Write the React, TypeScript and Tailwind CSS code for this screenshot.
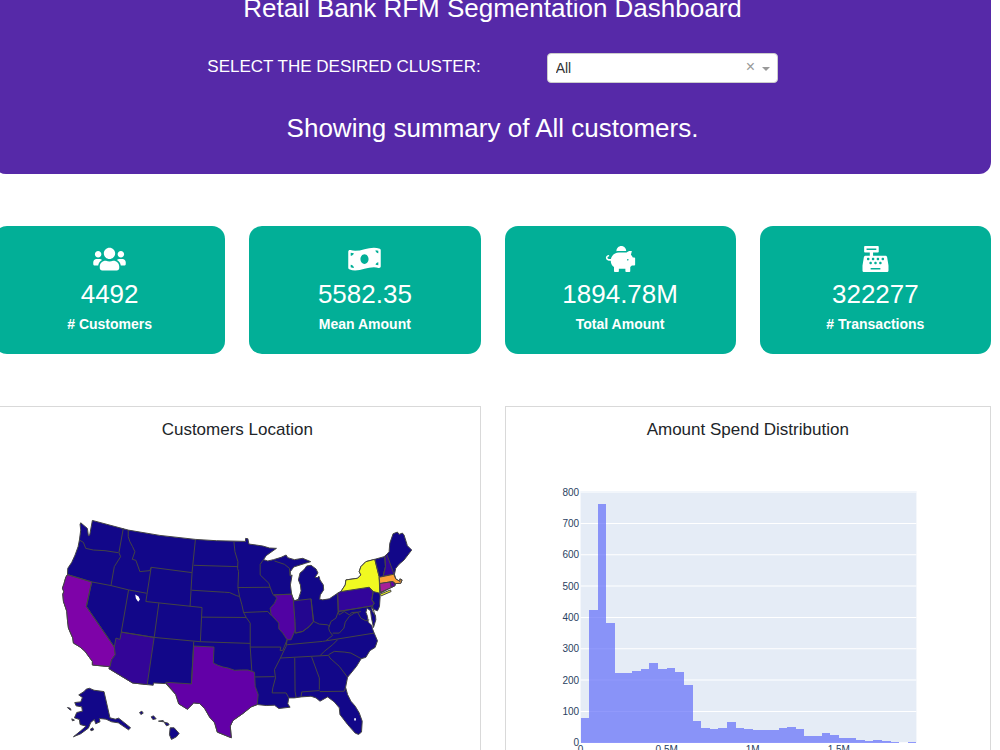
import { FaUsers, FaMoneyBillWave, FaPiggyBank, FaCashRegister } from "react-icons/fa";
import type { IconType } from "react-icons";

type Stat = { icon: IconType; value: string; label: string };

const stats: Stat[] = [
  { icon: FaUsers, value: "4492", label: "# Customers" },
  { icon: FaMoneyBillWave, value: "5582.35", label: "Mean Amount" },
  { icon: FaPiggyBank, value: "1894.78M", label: "Total Amount" },
  { icon: FaCashRegister, value: "322277", label: "# Transactions" },
];

const bins = [
  80, 423, 763, 383, 223, 223, 230, 237, 256, 236, 240, 226, 184, 69, 47, 44, 47, 65, 46, 43,
  40, 40, 40, 47, 49, 43, 21, 21, 31, 24, 15, 15, 8, 5, 8, 5, 3, 0, 3,
];

const mainland =
  "M127,46 L119,90 115,92 112,70 92,53 90,58 92,75 88,105 84,125 75,150 65,172 53,190 52,209 47,217 42,235 37,250 41,260 38,268 40,290 47,310 50,320 52,345 55,370 68,400 70,415 90,427 105,440 118,458 127,470 127,481 178,486 177,492 248,535 292,540 310,542 311,535 348,537 378,570 387,598 413,614 432,595 450,597 465,612 480,638 495,655 503,683 545,700 542,665 550,648 580,627 605,607 623,600 650,603 675,602 688,612 722,608 715,598 718,580 735,580 755,577 785,575 800,580 812,590 835,577 855,592 870,610 872,630 895,660 918,686 928,690 937,683 939,650 930,625 918,605 905,590 895,570 889,548 895,518 922,485 936,462 950,458 962,438 978,428 985,408 975,385 970,372 968,362 957,352 955,335 950,322 954,310 964,318 967,340 973,368 980,345 979,332 970,320 967,308 975,314 985,318 991,305 993,275 992,265 1000,262 1025,248 1037,243 1040,236 1055,235 1059,225 1053,222 1053,230 1040,222 1036,208 1040,190 1050,178 1065,165 1088,135 1075,122 1065,90 1060,84 1050,88 1045,81 1032,86 1022,115 1020,140 1013,148 1005,155 977,163 950,170 935,185 930,200 935,210 925,220 890,225 888,240 875,260 865,265 840,282 820,285 811,283 813,270 823,255 822,240 812,225 809,214 804,218 797,217 806,204 800,192 785,181 772,183 767,190 761,197 752,204 747,225 753,240 755,258 747,283 735,288 727,270 723,240 728,210 722,213 723,200 733,186 752,180 768,175 784,170 760,160 735,164 715,158 710,150 695,157 672,164 655,168 642,164 650,152 681,130 660,129 640,123 620,120 598,117 595,101 588,100 588,109 500,107 437,103 330,91 235,75 Z";

const alaska =
  "M86,571 L102,561 108,554 118,551 132,557 162,561 180,640 196,644 206,641 225,656 242,670 236,676 205,655 185,652 168,644 148,642 150,652 137,658 133,645 122,654 115,671 92,688 70,697 92,679 108,665 90,660 88,645 73,640 80,624 97,620 95,607 78,604 74,594 92,592 97,579 Z M52,609 60,611 63,617 57,614 Z M65,643 73,647 67,649 Z M121,674 128,670 131,676 123,679 Z";

const hawaii =
  "M269,624 L276,620 280,626 273,630 Z M304,637 L311,634 319,643 309,645 Z M326,650 L340,648 342,652 Z M343,653 L355,656 358,661 350,664 Z M361,670 L373,670 388,687 380,697 365,705 359,691 Z";

const shadedStates: { name: string; color: string; d: string }[] = [
  { name: "California", color: "#7e03a8", d: "M52,209 L125,231 109,305 193,427 196,450 185,465 180,486 127,481 127,470 118,458 105,440 90,427 70,415 68,400 55,370 52,345 50,320 40,290 38,268 41,260 37,250 42,235 47,217 Z" },
  { name: "Arizona", color: "#330597", d: "M214,382 L313,398 292,540 248,535 177,492 180,486 185,465 196,450 193,427 198,400 210,404 Z" },
  { name: "Texas", color: "#6200a7", d: "M432,424 L493,427 491,475 505,482 520,487 535,490 555,497 575,496 595,496 615,503 617,545 626,570 623,600 605,607 580,627 550,648 542,665 545,700 503,683 495,655 480,638 465,612 450,597 432,595 413,614 387,598 378,570 348,533 425,538 Z" },
  { name: "Illinois", color: "#5102a3", d: "M673,270 L727,268 732,288 737,350 738,375 725,405 713,405 700,385 688,372 688,355 665,330 662,310 675,295 682,280 Z" },
  { name: "Indiana", color: "#23068f", d: "M732,288 L785,282 792,350 780,365 760,380 738,385 737,350 Z" },
  { name: "Pennsylvania", color: "#32059a", d: "M865,265 L875,260 960,247 972,260 968,285 975,295 970,303 867,320 Z" },
  { name: "New York", color: "#f0f921", d: "M977,163 L950,170 935,185 930,200 935,210 925,220 890,225 888,240 875,260 960,247 972,260 992,265 990,215 Z M993,268 L1024,255 1026,260 996,273 Z" },
  { name: "New Hampshire", color: "#32059a", d: "M1007,155 L1013,148 1032,200 1034,208 1002,213 1009,185 Z" },
  { name: "Massachusetts", color: "#fca338", d: "M990,217 L1034,208 1040,222 1053,230 1052,222 1059,225 1055,235 1040,236 1030,230 992,236 Z" },
  { name: "Connecticut", color: "#a62098", d: "M992,236 L1023,231 1027,248 994,262 Z" },
  { name: "Rhode Island", color: "#6200a7", d: "M1023,231 L1032,230 1038,242 1027,248 Z" },
];

const borders = [
  "M88,105 L100,112 107,130 130,135 165,137 205,143 M220,70 L207,143 212,155 193,185 183,242",
  "M52,209 L125,231 183,242 236,255 290,265 M235,75 L235,95 240,110 248,125 255,140 247,163 258,166 270,200 300,197 304,187",
  "M304,187 L288,290 457,308 M304,187 L427,203 M437,104 L427,203 421,305 M432,181 L565,185",
  "M426,256 L525,262 540,263 560,272 570,275 M327,295 L313,398 M236,255 L214,382 M125,231 L109,305 193,427",
  "M214,382 L313,398 452,411 602,416 M457,308 L452,411 M457,337 L590,338 M432,411 L425,538",
  "M553,110 L556,140 565,170 564,190 567,200 565,248 570,275 577,300 582,323 590,338 602,355 602,427 607,500",
  "M565,248 L662,247 M582,323 L655,320 665,332 M642,164 L632,178 632,210 658,235 662,247 670,268",
  "M675,168 L705,178 720,190 722,210 M602,427 L694,427 692,437 700,437 713,405 M617,517 L675,516",
  "M670,270 L727,268",
  "M713,420 L820,410 975,385 M693,460 L838,452 M713,405 L710,425 700,445 693,460 675,495 678,520 670,550 668,565 710,565 718,580",
  "M736,460 L737,560 740,578 M787,457 L810,520 810,555 M755,577 L757,562 810,558 812,561 885,560 889,548",
  "M838,452 L842,460 870,485 895,518 M813,452 L825,440 850,420 865,405 M838,450 L855,440 885,442 905,445 936,462",
  "M738,385 L760,380 780,365 793,350 810,358 835,360 840,366 M785,282 L793,350 M865,265 L867,320 860,340 845,350 838,370 841,380 850,392 830,408",
  "M850,385 L870,385 884,370 888,352 900,335 915,325 935,320 M867,320 L870,330 885,320 900,330 908,323 925,322 935,340 950,348 960,345",
  "M960,247 L972,260 968,285 975,295 970,303 M867,320 L970,303 978,335 M977,163 L990,215 M1007,155 L1009,185 1002,213",
];

const yTicks = [0, 100, 200, 300, 400, 500, 600, 700, 800];
const xTicks = ["0", "0.5M", "1M", "1.5M"];

function CustomersMap() {
  return (
    <svg viewBox="-166 -166 1458 978" className="block w-full" role="img" aria-label="Customers by state">
      <g stroke="#444444" strokeWidth="3" strokeLinejoin="round">
        <path d={mainland} fill="#120789" />
        <path d={alaska} fill="#120789" />
        <path d={hawaii} fill="#120789" />
        {shadedStates.map((s) => (
          <path key={s.name} d={s.d} fill={s.color} />
        ))}
        {borders.map((d) => (
          <path key={d} d={d} fill="none" />
        ))}
      </g>
      <path d="M256,269 L266,275 270,284 265,291 258,281 Z M915,641 h5 v7 h-5 Z" fill="#ffffff" />
    </svg>
  );
}

function AmountHistogram() {
  const scale = 250.5 / 800;
  const step = 335.5 / bins.length;
  return (
    <svg viewBox="506 450 484 330" className="block w-full font-['Liberation_Sans',sans-serif]" role="img" aria-label="Amount spend histogram">
      <rect x="580.5" y="491" width="335.5" height="251.5" fill="#E5ECF6" />
      {yTicks.map((t) => (
        <line key={t} x1="580.5" x2="916" y1={742.5 - t * scale} y2={742.5 - t * scale} stroke="#ffffff" strokeWidth="1" />
      ))}
      <g fill="#636efa" fillOpacity="0.7" shapeRendering="crispEdges">
        {bins.map((v, i) => (
          <rect key={i} x={580.5 + i * step} y={742.5 - v * scale} width={step} height={v * scale} />
        ))}
      </g>
      <g fill="#2a3f5f" fontSize="10">
        {yTicks.map((t) => (
          <text key={t} x="579" y={746 - t * scale} textAnchor="end">
            {t}
          </text>
        ))}
        {xTicks.map((t, i) => (
          <text key={t} x={580.5 + i * 86} y="753" textAnchor="middle">
            {t}
          </text>
        ))}
      </g>
    </svg>
  );
}

export default function App() {
  return (
    <div className="h-screen overflow-hidden bg-white font-['Liberation_Sans',Arial,sans-serif]">
      <main className="-ml-[6px] -mt-2 mr-[9px]">
        <header className="flex flex-col items-center rounded-b-xl bg-[#5629a8] pb-7 text-white">
          <h1 className="text-[26px] leading-8">Retail Bank RFM Segmentation Dashboard</h1>
          <div className="mt-[29px] flex items-center gap-[66px]">
            <label htmlFor="cluster" className="pb-0.5 text-[17px] leading-6">
              SELECT THE DESIRED CLUSTER:
            </label>
            <div className="relative">
              <select
                id="cluster"
                defaultValue="All"
                className="block h-[30px] w-[231px] appearance-none rounded-[4px] border border-[#cccccc] bg-white px-2 text-sm text-[#333333]"
              >
                <option>All</option>
              </select>
              <button type="button" aria-label="Clear selection" className="absolute right-6 top-1 h-5 w-2 text-base leading-5 text-[#999999]">
                ×
              </button>
              <svg viewBox="0 0 8 4" className="pointer-events-none absolute right-2 top-[14px] h-1 w-2" aria-hidden="true">
                <path d="M0 0h8L4 4z" fill="#999999" />
              </svg>
            </div>
          </div>
          <h2 className="mt-7 mb-px text-[26px] leading-[34px]">Showing summary of All customers.</h2>
        </header>

        <section className="mt-[52px] grid grid-cols-4 gap-6">
          {stats.map(({ icon: Icon, value, label }) => (
            <article key={label} className="flex flex-col items-center rounded-[13px] bg-[#02af97] pb-[22px] pt-5 text-white">
              <Icon className="h-[26px] w-[33px]" aria-hidden="true" />
              <p className="mt-1 text-[26px] leading-9">{value}</p>
              <p className="mt-1 text-[14px] font-bold leading-4">{label}</p>
            </article>
          ))}
        </section>

        <section className="mt-[52px] grid grid-cols-2 gap-6 text-center text-[#212529]">
          <article className="border border-[#d9d9d9]">
            <h3 className="mt-[11px] mb-2 text-[17px] leading-6">Customers Location</h3>
            <CustomersMap />
          </article>
          <article className="border border-[#d9d9d9]">
            <h3 className="mt-[11px] mb-2 text-[17px] leading-6">Amount Spend Distribution</h3>
            <AmountHistogram />
          </article>
        </section>
      </main>
    </div>
  );
}
